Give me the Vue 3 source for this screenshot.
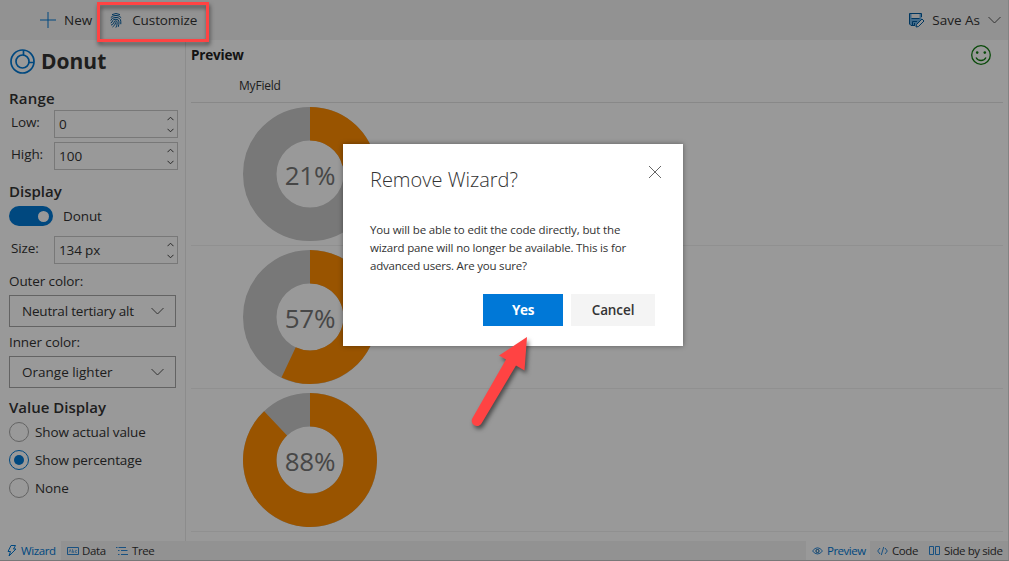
<script setup>
import { ref } from 'vue'

const low = ref(0)
const high = ref(100)
const spinPaths = ['M.5 4.2 3.500 1.200 6.500 4.200', 'M.5.8 3.500 3.800 6.500.8']
const selects = [
  { label: 'Outer color:', value: 'Neutral tertiary alt', cls: 'outer' },
  { label: 'Inner color:', value: 'Orange lighter', cls: 'inner' }
]
const radios = [
  { label: 'Show actual value', on: false, cls: 'r1' },
  { label: 'Show percentage', on: true, cls: 'r2' },
  { label: 'None', on: false, cls: 'r3' }
]
const values = [21, 57, 88]

function slice(pct) {
  const a = (pct / 100) * Math.PI * 2
  const s = Math.sin(a)
  const c = Math.cos(a)
  const big = pct > 50 ? 1 : 0
  return `M67 0A67 67 0 ${big} 1 ${67 + 67 * s} ${67 - 67 * c}L${67 + 33.5 * s} ${67 - 33.5 * c}A33.5 33.5 0 ${big} 0 67 33.5Z`
}
</script>

<template>
  <div class="app">
    <header class="toolbar">
      <div class="cmd new">
        <svg width="16" height="16" viewBox="0 0 16 16"><path d="M8 0v16M0 8h16" stroke="#0078d4" fill="none" /></svg>
        <span class="t-new">New</span>
      </div>
      <div class="cmd customize">
        <svg width="12" height="15" viewBox="0 0 12 15" fill="none" stroke="#005a9e" stroke-width="1">
          <path d="M2 1.6Q6-.6 10 1.6M.8 4.6Q2.4 2.4 6 2.4t5.2 2.4M.7 7.6Q1.4 4.4 6 4.4q4.8.2 4.8 4.2v2.6M.7 10Q2.4 9.4 2.6 7.6 3.2 6.200 6 6.200q2.900.2 3 2.700 0 3-.8 5M1 12.200q3-1 3.500-4Q4.800 7.900 6 7.900q1.200.1 1.200 1.500 0 3-1.300 5.200M2.500 14Q5.500 12 5.800 9.300" />
        </svg>
        <span class="t-cust">Customize</span>
      </div>
      <div class="cmd saveas">
        <svg width="17" height="16" viewBox="0 0 17 16" fill="none" stroke="#005a9e">
          <path d="M1.500 1.500h12v6L8 13.500H3L1.500 12z" fill="#6fb2e6" stroke="none" />
          <path d="M3.500 1.500h8v4.500h-8z" fill="#f4f4f4" stroke="none" />
          <path d="M13.500 5V1.500h-12V12L3 13.500h4M3.500 6.500h8M4.500 13V9.500H9M6.500 11v2" />
          <path d="M8.500 12.500 14 7l2 2-5.500 5.500L8 15z" fill="#f4f4f4" />
        </svg>
        <span class="t-save">Save As</span>
        <svg class="caret" width="13" height="8" viewBox="0 0 13 8"><path d="M.5 1 6.500 7 12.500 1" stroke="#555" fill="none" /></svg>
      </div>
    </header>

    <div class="body">
      <aside class="pane">
        <div class="title">
          <svg width="25" height="25" viewBox="0 0 25 25" fill="none" stroke="#0078d4" stroke-width="1.700">
            <circle cx="12.500" cy="12.500" r="11.500" /><circle cx="12.500" cy="12.500" r="6.500" />
            <path d="M13.500 1v5M19 13.500h5" />
          </svg>
          <h1>Donut</h1>
        </div>
        <h2 class="h-range">Range</h2>
        <div class="field low">
          <label class="t-low">Low:</label>
          <div class="spin"><span>{{ low }}</span><i><svg v-for="p in spinPaths" :key="p" width="7" height="5" viewBox="0 0 7 5"><path :d="p" /></svg></i></div>
        </div>
        <div class="field high">
          <label class="t-high">High:</label>
          <div class="spin"><span>{{ high }}</span><i><svg v-for="p in spinPaths" :key="p" width="7" height="5" viewBox="0 0 7 5"><path :d="p" /></svg></i></div>
        </div>
        <h2 class="h-display">Display</h2>
        <div class="toggle-row"><span class="toggle"><b></b></span><span class="t-donut">Donut</span></div>
        <div class="field size">
          <label class="t-size">Size:</label>
          <div class="spin"><span>134 px</span><i><svg v-for="p in spinPaths" :key="p" width="7" height="5" viewBox="0 0 7 5"><path :d="p" /></svg></i></div>
        </div>
        <div v-for="s in selects" :key="s.label" class="picker" :class="s.cls">
          <label>{{ s.label }}</label>
          <div class="select"><span>{{ s.value }}</span><svg width="13" height="8" viewBox="0 0 13 8"><path d="M.5 1 6.500 7 12.500 1" stroke="#555" fill="none" /></svg></div>
        </div>
        <h2 class="h-value">Value Display</h2>
        <div v-for="r in radios" :key="r.label" class="radio" :class="[r.cls, { on: r.on }]"><b></b><span>{{ r.label }}</span></div>
      </aside>

      <main class="preview">
        <div class="preview-head">
          <h3>Preview</h3>
          <svg width="20" height="20" viewBox="0 0 20 20" fill="none" stroke="#107c10" stroke-width="1.300">
            <circle cx="10" cy="10" r="9.300" /><path d="M5 12.500q1.500 3 5 3t5-3" />
            <circle cx="6.200" cy="7.600" r="1.300" fill="#107c10" stroke="none" /><circle cx="13.800" cy="7.600" r="1.300" fill="#107c10" stroke="none" />
          </svg>
        </div>
        <div class="col-head"><span>MyField</span></div>
        <div v-for="v in values" :key="v" class="row">
          <div class="donut">
            <svg width="134" height="134" viewBox="0 0 134 134">
              <circle cx="67" cy="67" r="50.250" fill="none" stroke="#c8c8c8" stroke-width="33.500" />
              <path :d="slice(v)" fill="#ff8c00" />
            </svg>
            <span>{{ v }}%</span>
          </div>
        </div>
      </main>
    </div>

    <footer class="tabs">
      <div class="tab active wizard">
        <svg width="10" height="12" viewBox="0 0 10 12" fill="none" stroke="#0078d4"><path d="M4 .5h4.500L6.500 4H9L2 11l1.500-4.500H1z" /></svg>
        <span>Wizard</span>
      </div>
      <div class="tab data">
        <svg width="12" height="8" viewBox="0 0 12 8" fill="none" stroke="#2b88d8"><path d="M.5.5h11v7H.5z" /><path d="M2 5.500 3.200 2.500l1.200 3M5.500 2v3.500h1.300V4H5.500M10 3.500H8.500v2H10" stroke-width=".6" /></svg>
        <span>Data</span>
      </div>
      <div class="tab tree">
        <svg width="12" height="8" viewBox="0 0 12 8" fill="none" stroke="#2b88d8"><path d="M0 .5h1.500M2.500.5H10M2 3.500h1.500M5 3.500h6.500M2 7.500h1.500M5 7.500h7" /></svg>
        <span>Tree</span>
      </div>
      <div class="tab active prev">
        <svg width="11" height="8" viewBox="0 0 11 8" fill="none" stroke="#2b88d8"><path d="M.5 4Q5.500-2.500 10.500 4 5.500 10 .5 4z" /><circle cx="5.500" cy="4" r="1.600" stroke="#005a9e" /></svg>
        <span>Preview</span>
      </div>
      <div class="tab code">
        <svg width="11" height="8" viewBox="0 0 11 8" fill="none" stroke="#2b88d8"><path d="M3 1 .7 4 3 7M8 1l2.300 3L8 7M6.700 0 4.300 8" /></svg>
        <span>Code</span>
      </div>
      <div class="tab side">
        <svg width="11" height="10" viewBox="0 0 11 10" fill="none" stroke="#2b88d8"><path d="M.5.5h4v8h-4zM6.500.5h4v8h-4z" /></svg>
        <span>Side by side</span>
      </div>
    </footer>

    <div class="overlay">
      <section class="dialog">
        <div class="dlg-head">
          <h4>Remove Wizard?</h4>
          <svg width="14" height="14" viewBox="0 0 14 14"><path d="M1 1l12 12M13 1 1 13" stroke="#666" fill="none" /></svg>
        </div>
        <p><span class="l1">You will be able to edit the code directly, but the</span><br><span class="l2">wizard pane will no longer be available. This is for</span><br><span class="l3">advanced users. Are you sure?</span></p>
        <div class="actions"><button class="yes">Yes</button><button class="no">Cancel</button></div>
      </section>
    </div>

    <div class="callout"></div>
    <svg class="arrow" width="90" height="110" viewBox="0 0 90 110">
      <path d="M67 12 39 30.500 46 34.500 12.500 93A5 5 0 0 0 21.500 98.500L56 40.500 64.500 45.500z" fill="#ff4343" />
    </svg>
  </div>
</template>

<style>
html, body { margin: 0; overflow: hidden; }
</style>

<style scoped>
* { box-sizing: border-box; }
.app { position: relative; width: 1009px; height: 561px; display: flex; flex-direction: column; background: #fff; color: #333; font: 14px/20px "Open Sans", "Noto Sans", sans-serif; overflow: hidden; white-space: nowrap; }
.app::before { content: ""; position: absolute; inset: 0; border-right: 1px solid #dadada; border-bottom: 1px solid #c8c8c8; }
h1, h2, h3, h4, p { margin: 0; }
svg { display: block; flex: none; }
.toolbar { height: 40px; flex: none; display: flex; align-items: center; background: #f4f4f4; padding-left: 40px; }
.cmd { display: flex; align-items: center; font-size: 13.5px; }
.new span { margin-left: 8px; }
.customize { margin-left: 18px; }
.customize span { margin-left: 10px; letter-spacing: -.1px; }
.saveas { margin-left: auto; padding-right: 8px; }
.saveas span { margin-left: 7px; }
.caret { margin-left: 8px; }
.body { height: 501px; flex: none; display: flex; }
.pane { width: 186px; flex: none; border-right: 1px solid #eaeaea; padding-left: 9px; }
.title { display: flex; align-items: center; height: 42px; padding-left: 1px; }
.title h1 { font-size: 21px; line-height: 28px; margin-left: 6px; font-weight: 700; color: #333; }
h2 { position: relative; top: -1px; font-size: 15px; line-height: 20px; font-weight: 600; }
.h-range { margin-top: 7px; letter-spacing: .2px; }
.field { display: flex; height: 28px; font-size: 13.5px; }
.field label { width: 45px; padding-left: 2px; line-height: 25px; letter-spacing: -.1px; }
.low { margin-top: 1px; }
.high { margin-top: 4px; }
.spin { width: 124px; height: 28px; border: 1px solid #c8c8c8; display: flex; justify-content: space-between; padding: 0 3px 0 4px; line-height: 27px; }
.spin i { display: flex; flex-direction: column; justify-content: space-between; padding: 5px 0 4px; }
.spin path { fill: none; stroke: #444; }
.h-display { margin-top: 12px; }
.toggle-row { display: flex; align-items: center; height: 20px; margin-top: 4px; font-size: 13.5px; letter-spacing: -.1px; }
.toggle { width: 44px; height: 20px; border-radius: 10px; background: #0078d4; display: flex; align-items: center; justify-content: flex-end; padding-right: 4px; margin-right: 10px; }
.toggle b { width: 11px; height: 11px; border-radius: 50%; background: #fff; }
.size { margin-top: 10px; }
.size .spin { letter-spacing: -.15px; }
.picker { font-size: 13.5px; letter-spacing: -.1px; }
.picker label { display: block; height: 20px; line-height: 20px; }
.outer { margin-top: 7px; }
.outer .select { margin-top: 4px; letter-spacing: -.2px; }
.inner { margin-top: 5px; }
.inner .select { margin-top: 4px; letter-spacing: 0; }
.select { width: 167px; height: 32px; border: 1px solid #a6a6a6; display: flex; align-items: center; justify-content: space-between; padding: 0 11px 0 12px; }
.h-value { margin-top: 10px; }
.radio { display: flex; align-items: center; height: 20px; margin-bottom: 8px; font-size: 13.5px; letter-spacing: -.12px; }
.h-value + .radio { margin-top: 4px; }
.radio b { width: 20px; height: 20px; border: 1px solid #a6a6a6; border-radius: 50%; margin-right: 6px; display: flex; align-items: center; justify-content: center; }
.radio.on b { border-color: #0078d4; }
.radio.on b::after { content: ""; width: 10px; height: 10px; border-radius: 50%; background: #0078d4; }
.preview { flex: 1; padding: 0 6px 0 5px; }
.preview-head { height: 30px; display: flex; align-items: center; justify-content: space-between; padding-right: 12px; }
.preview-head h3 { font-size: 13.5px; font-weight: 700; color: #222; letter-spacing: -.2px; }
.col-head { height: 33px; border-bottom: 1px solid #e3e3e3; padding: 6px 0 0 48px; font-size: 12px; letter-spacing: -.2px; }
.row { height: 143px; border-bottom: 1px solid #f0f0f0; padding: 4px 0 0 52px; }
.donut { position: relative; width: 134px; height: 134px; }
.donut span { position: absolute; inset: 1px 0 0; text-align: center; line-height: 134px; font-size: 26px; letter-spacing: -.2px; color: #777; }
.tabs { height: 20px; flex: none; display: flex; background: #f4f4f4; font-size: 11.5px; line-height: 20px; letter-spacing: -.4px; }
.tab { display: flex; align-items: center; }
.active { background: #fff; color: #0078d4; }
.wizard { width: 61px; padding-left: 7px; }
.wizard span { margin-left: 4px; }
.data { padding-left: 6px; width: 55px; }
.data span { margin-left: 3px; }
.tree span { margin-left: 4px; }
.prev { margin-left: auto; width: 64px; padding-left: 6px; }
.prev span { margin-left: 4px; letter-spacing: -.5px; }
.code { width: 52px; padding-left: 7px; }
.code span { margin-left: 4px; }
.side { width: 87px; padding-left: 7px; }
.side span { margin-left: 4px; }
.overlay { position: absolute; left: 0; top: 0; width: 1009px; height: 561px; background: rgba(0, 0, 0, .4); }
.dialog { position: absolute; left: 343px; top: 144px; width: 340px; height: 202px; background: #fff; box-shadow: 0 0 5px rgba(0, 0, 0, .4); padding: 20px 28px; }
.dlg-head { display: flex; justify-content: space-between; height: 56px; margin: 0 -7px 0 -1px; }
.dlg-head h4 { font-size: 20px; line-height: 32px; font-weight: 300; }
.dlg-head svg { margin: 1px 0 0; }
.dialog p { position: relative; top: 1px; font-size: 11.5px; line-height: 18px; margin-left: -1px; }
.l1 { letter-spacing: -.14px; }
.l2 { letter-spacing: -.16px; }
.l3 { letter-spacing: -.2px; }
.actions { display: flex; justify-content: flex-end; gap: 8px; margin-top: 20px; }
button { border: 0; height: 32px; font: 600 13.5px/32px "Open Sans", sans-serif; padding: 0; }
.yes { width: 80px; background: #0078d7; color: #fff; font-weight: 700; letter-spacing: -.3px; }
.no { width: 84px; background: #f4f4f4; color: #333; letter-spacing: -.1px; }
.callout { position: absolute; left: 97px; top: 2px; width: 112px; height: 40px; border: 3px solid #ff4343; filter: drop-shadow(1px 3px 2px rgba(0, 0, 0, .5)); }
.arrow { position: absolute; left: 460px; top: 325px; filter: drop-shadow(2px 3px 2px rgba(0, 0, 0, .5)); }
</style>
